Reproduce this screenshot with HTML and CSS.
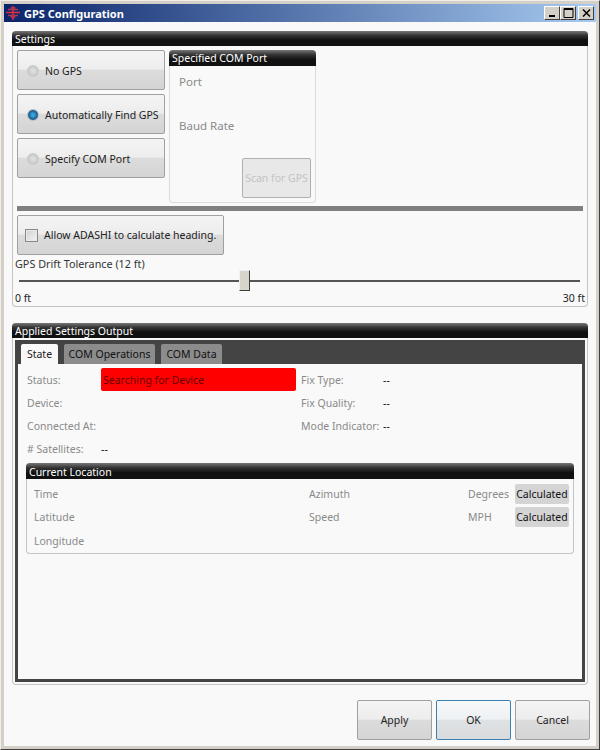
FILE: index.html
```html
<!DOCTYPE html>
<html lang="en">
<head>
<meta charset="utf-8">
<title>GPS Configuration</title>
<link rel="stylesheet" href="styles.css">
</head>
<body>
<div class="window">
  <div class="titlebar">
    <svg class="app-icon" width="16" height="16" viewBox="0 0 16 16"><path d="M3 4.500h3.500v-2.500M3 10.500h3.500v2.500M13 4.500H9.500v-2.500M13 10.500H9.500v2.500" fill="none" stroke="#a83a5a" stroke-width="1.500"/><path d="M8 1v14M1 7.500h14" fill="none" stroke="#e0303c" stroke-width="1.500"/></svg>
    <span class="title">GPS Configuration</span>
    <div class="win-buttons">
      <span class="win-btn"><svg width="13" height="11" viewBox="0 0 13 11"><rect x="3" y="7" width="6" height="2" fill="#000"/></svg></span>
      <span class="win-btn"><svg width="13" height="11" viewBox="0 0 13 11"><path d="M2 0.500h9v9H2z M2 1.500h9" fill="none" stroke="#000"/></svg></span>
      <span class="win-btn win-btn-close"><svg width="13" height="11" viewBox="0 0 13 11"><path d="M3 1.500l7 7M10 1.500l-7 7" fill="none" stroke="#000" stroke-width="1.500"/></svg></span>
    </div>
  </div>
  <div class="content">
    <section class="group settings">
      <h2 class="group-head">Settings</h2>
      <div class="settings-body">
        <div class="top-row">
          <div class="radio-col">
            <label class="toggle toggle-radio"><span class="radio"></span>No GPS</label>
            <label class="toggle toggle-radio"><span class="radio radio-on"></span>Automatically Find GPS</label>
            <label class="toggle toggle-radio"><span class="radio"></span>Specify COM Port</label>
          </div>
          <div class="group com-box">
            <h3 class="group-head small-head">Specified COM Port</h3>
            <div class="com-body">
              <div class="com-label">Port</div>
              <div class="com-label">Baud Rate</div>
              <div class="scan">Scan for GPS</div>
            </div>
          </div>
        </div>
        <div class="separator"></div>
        <label class="toggle check-toggle"><span class="check"></span>Allow ADASHI to calculate heading.</label>
        <div class="drift-label">GPS Drift Tolerance (12 ft)</div>
        <div class="slider">
          <span class="track track-left"></span>
          <span class="thumb"></span>
          <span class="track track-right"></span>
        </div>
        <div class="slider-ends"><span>0 ft</span><span>30 ft</span></div>
      </div>
    </section>

    <section class="group output">
      <h2 class="group-head">Applied Settings Output</h2>
      <div class="tabs">
        <div class="tab-strip">
          <span class="tab tab-active">State</span>
          <span class="tab tab-ops">COM Operations</span>
          <span class="tab tab-data">COM Data</span>
        </div>
        <div class="tab-page">
          <div class="state-grid">
            <span class="lbl">Status:</span><span class="status-red">Searching for Device</span><span class="lbl">Fix Type:</span><span class="val">--</span>
            <span class="lbl">Device:</span><span></span><span class="lbl">Fix Quality:</span><span class="val">--</span>
            <span class="lbl">Connected At:</span><span></span><span class="lbl">Mode Indicator:</span><span class="val">--</span>
            <span class="lbl">#&nbsp;Satellites:</span><span class="val">--</span><span></span><span></span>
          </div>
          <div class="group location">
            <h3 class="group-head small-head">Current Location</h3>
            <div class="loc-grid">
              <span class="lbl">Time</span><span class="lbl">Azimuth</span><span class="lbl">Degrees</span><span class="calc">Calculated</span>
              <span class="lbl">Latitude</span><span class="lbl">Speed</span><span class="lbl">MPH</span><span class="calc">Calculated</span>
              <span class="lbl">Longitude</span><span></span><span></span><span></span>
            </div>
          </div>
        </div>
      </div>
    </section>

    <div class="footer">
      <button class="dlg-btn" type="button">Apply</button>
      <button class="dlg-btn dlg-btn-default" type="button">OK</button>
      <button class="dlg-btn" type="button">Cancel</button>
    </div>
  </div>
</div>
</body>
</html>
```
FILE: styles.css
```css
* { box-sizing: border-box; }
html, body { margin: 0; padding: 0; }
body { width: 600px; height: 750px; overflow: hidden; font-family: "Noto Sans", "DejaVu Sans", sans-serif; font-size: 10.500px; color: #000; }

.window {
  width: 600px; height: 750px; display: flex; flex-direction: column;
  background: #d4d0c8;
  border-style: solid; border-width: 1px; border-color: #f0eee8 #404040 #404040 #f0eee8;
  padding: 3px;
}
.titlebar {
  height: 18px; flex: none; display: flex; align-items: center;
  background: linear-gradient(90deg, #0a246a, #a6caf0);
  padding: 0 2px 0 1px;
}
.app-icon { flex: none; margin-right: 3px; }
.title { color: #fff; font-weight: 700; font-size: 11px; }
.win-buttons { margin-left: auto; display: flex; }
.win-btn {
  width: 16px; height: 14px; display: flex; align-items: center; justify-content: center;
  background: #d4d0c8;
  border: 1px solid; border-color: #fff #404040 #404040 #fff;
}
.win-btn-close { margin-left: 2px; }

.content { flex: 1; background: #f9f9f9; display: flex; flex-direction: column; padding: 9px 8px 0 8px; }

.group { display: flex; flex-direction: column; border: 1px solid #c4c4c4; border-top: 0; border-radius: 4px; }
.group-head {
  margin: 0 -1px; height: 15px; flex: none; line-height: 17px; padding-left: 3px;
  font-size: 10.500px; font-weight: 400; color: #fff; white-space: nowrap;
  background: linear-gradient(180deg, #777 0, #333 30%, #111 60%, #111 100%);
  border-radius: 4px 4px 0 0;
}
.settings { height: 276px; flex: none; }
.settings-body { padding: 4px 4px 0 4px; display: flex; flex-direction: column; flex: 1; }
.top-row { display: flex; gap: 4px; height: 153px; flex: none; }
.radio-col { width: 148px; display: flex; flex-direction: column; gap: 4px; }

.toggle {
  height: 40px; flex: none; display: flex; align-items: center; white-space: nowrap;
  border: 1px solid #a0a0a0; border-radius: 2px; color: #222;
  background: linear-gradient(180deg, #f4f4f4 0, #ededed 48%, #dcdcdc 50%, #d4d4d4 100%);
}
.toggle-radio { padding-top: 2px; }
.radio {
  width: 12px; height: 12px; margin: 0 6px 0 9px; border-radius: 50%; flex: none;
  background: radial-gradient(circle at 50% 50%, #e4e4e4 0, #cfcfcf 55%, #b4b4b4 100%);
  border: 1px solid #cccccc;
}
.radio-on { background: radial-gradient(circle at 50% 50%, #4aaee4 0, #2a8ac4 35%, #1c5c86 60%, #8aa0b0 100%); border-color: #b8c0c8; }
.check-toggle { width: 207px; margin-top: 4px; }
.check { width: 13px; height: 13px; margin: 0 6px 0 7px; border: 1px solid #8a8a8a; background: linear-gradient(135deg, #d0d0d0, #f4f4f4); box-shadow: inset 0 0 0 1px #e8e8e8; flex: none; }

.com-box { width: 147px; border-color: #dcdcdc; }
.com-body { flex: 1; display: flex; flex-direction: column; padding: 8px 4px 4px 9px; }
.com-label { color: #8a8a8a; height: 44px; font-size: 11.500px; }
.com-label + .com-label { height: 31px; }
.scan {
  margin-top: auto; align-self: flex-end; width: 69px; height: 40px; display: flex; align-items: center; justify-content: center;
  border: 1px solid #b0b0b0; border-radius: 2px; background: #e8e8e8; color: #c4c4c4; white-space: nowrap; overflow: hidden;
}

.separator { height: 5px; background: #808080; margin-top: 3px; flex: none; }
.drift-label { margin: 1px 0 0 -2px; height: 16px; line-height: 16px; color: #333; font-size: 10.800px; }
.slider { height: 21px; display: flex; align-items: center; padding: 0 3px 0 2px; margin-top: -2px; }
.track { height: 2px; background: #555; }
.track-left { width: 220px; flex: none; }
.track-right { flex: 1; }
.thumb { width: 11px; height: 21px; flex: none; background: #d8d4cc; border: 1px solid; border-color: #f0f0f0 #404040 #404040 #f0f0f0; }
.slider-ends { display: flex; justify-content: space-between; margin: 0 -2px; height: 15px; line-height: 14px; color: #222; }

.output { margin-top: 16px; height: 362px; flex: none; }
.tabs { margin: 2px; flex: 1; background: #444; padding: 0 3px 3px 3px; display: flex; flex-direction: column; }
.tab-strip { height: 24px; flex: none; display: flex; align-items: flex-end; padding-left: 3px; }
.tab { height: 20px; line-height: 21px; text-align: center; background: #8c8c8c; color: #111; border-radius: 2px 2px 0 0; white-space: nowrap; }
.tab-active { width: 37px; background: #f9f9f9; color: #222; }
.tab-ops { width: 91px; margin-left: 6px; }
.tab-data { width: 61px; margin-left: 6px; }
.tab-page { flex: 1; background: #f9f9f9; padding: 4px 8px 0 8px; }

.lbl { color: #8a8a8a; white-space: nowrap; }
.val { color: #111; }
.state-grid { display: grid; grid-template-columns: 74px 200px 82px 1fr; grid-auto-rows: 23px; align-items: center; margin-left: 1px; }
.status-red { background: #ff0000; color: #6a0000; width: 195px; height: 23px; line-height: 25px; border-radius: 2px; padding-left: 2px; }
.location { margin-top: 3px; height: 91px; flex: none; }
.small-head { height: 16px; line-height: 16px; }
.location .small-head { line-height: 19px; }
.loc-grid { display: grid; grid-template-columns: 275px 159px 47px 54px; grid-template-rows: 23px 23px 25px; align-items: center; padding: 3px 0 0 7px; }
.calc { background: #d4d4d4; color: #111; height: 20px; line-height: 20px; border-radius: 2px; text-align: center; }

.footer { flex: none; display: flex; justify-content: flex-end; gap: 4px; margin-top: 15px; margin-right: -2px; }
.dlg-btn {
  width: 75px; height: 40px; padding: 0; font: inherit; color: #222;
  border: 1px solid #a0a0a0; border-radius: 2px;
  background: linear-gradient(180deg, #f4f4f4 0, #ededed 48%, #dcdcdc 50%, #d4d4d4 100%);
}
.dlg-btn-default { border-color: #3c7fb1; background: linear-gradient(180deg, #f6f8fa 0, #eef1f3 48%, #dfe2e4 50%, #d8dadc 100%); }
```
